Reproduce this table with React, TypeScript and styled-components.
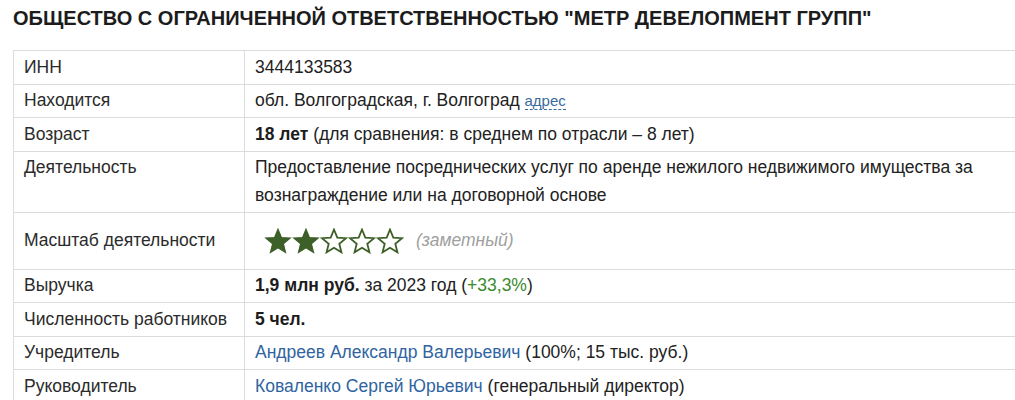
import styled, { createGlobalStyle } from "styled-components";

const Global = createGlobalStyle`
  body {
    margin: 0;
    background: #fff;
    font-family: "Liberation Sans", Arial, sans-serif;
    color: #222;
  }
`;

const Page = styled.div`
  padding: 7px 0 0 13px;
  overflow: hidden;
  width: 1015px;
  box-sizing: border-box;
`;

const Title = styled.h1`
  margin: 0 0 21px;
  font-size: 20px;
  line-height: 22px;
  font-weight: bold;
  color: #1c1c1c;
  white-space: nowrap;
`;

const Table = styled.table`
  border-collapse: collapse;
  width: 1015px;
  font-size: 17.5px;
  line-height: 27.5px;

  td {
    border: 1px solid #dcdcdc;
    vertical-align: top;
    padding: 2.5px 10px;
  }
`;

const Label = styled.td<{ $tall?: boolean }>`
  width: 210px;
  color: #2b2b2b;
  vertical-align: ${(p) => (p.$tall ? "middle" : "top")} !important;
`;

const Value = styled.td<{ $tall?: boolean }>`
  color: #222;
  padding-top: ${(p) => (p.$tall ? "14px" : "2.5px")} !important;
  padding-bottom: ${(p) => (p.$tall ? "14px" : "2.5px")} !important;

  b {
    color: #1c1c1c;
  }
`;

const Scale = styled.div`
  display: flex;
  align-items: center;
  gap: 12px;
  height: 28px;
  padding-left: 9px;
`;

const Stars = styled.span`
  display: flex;
`;

const Note = styled.span`
  font-style: italic;
  color: #a0a0a0;
`;

const Dashed = styled.span`
  font-size: 15px;
  color: #3b6a9c;
  border-bottom: 1px dashed #3b6a9c;
  line-height: 16px;
`;

const Link = styled.span`
  color: #2f64a0;
`;

const Up = styled.span`
  color: #3a8a2c;
`;

type Row = {
  label: string;
  value: React.ReactNode;
  tall?: boolean;
};

const Star = ({ filled }: { filled: boolean }) => (
  <svg width="28" height="26" viewBox="0 0 28 26">
    <polygon
      points="14,1.5 17.3,9.6 26,10.2 19.3,15.8 21.4,24.3 14,19.7 6.6,24.3 8.7,15.8 2,10.2 10.7,9.6"
      fill={filled ? "#3d5f28" : "#fff"}
      stroke="#3d5f28"
      strokeWidth={filled ? 1.4 : 1.8}
    />
  </svg>
);

const rows: Row[] = [
  { label: "ИНН", value: "3444133583" },
  {
    label: "Находится",
    value: (
      <>
        обл. Волгоградская, г. Волгоград <Dashed>адрес</Dashed>
      </>
    ),
  },
  {
    label: "Возраст",
    value: (
      <>
        <b>18 лет</b> (для сравнения: в среднем по отрасли – 8 лет)
      </>
    ),
  },
  {
    label: "Деятельность",
    value:
      "Предоставление посреднических услуг по аренде нежилого недвижимого имущества за вознаграждение или на договорной основе",
  },
  {
    label: "Масштаб деятельности",
    tall: true,
    value: (
      <Scale>
        <Stars>
          {[0, 1, 2, 3, 4].map((i) => (
            <Star key={i} filled={i < 2} />
          ))}
        </Stars>
        <Note>(заметный)</Note>
      </Scale>
    ),
  },
  {
    label: "Выручка",
    value: (
      <>
        <b>1,9 млн руб.</b> за 2023 год (<Up>+33,3%</Up>)
      </>
    ),
  },
  { label: "Численность работников", value: <b>5 чел.</b> },
  {
    label: "Учредитель",
    value: (
      <>
        <Link>Андреев Александр Валерьевич</Link> (100%; 15 тыс. руб.)
      </>
    ),
  },
  {
    label: "Руководитель",
    value: (
      <>
        <Link>Коваленко Сергей Юрьевич</Link> (генеральный директор)
      </>
    ),
  },
];

const App = () => {
  return (
    <Page>
      <Global />
      <Title>ОБЩЕСТВО С ОГРАНИЧЕННОЙ ОТВЕТСТВЕННОСТЬЮ "МЕТР ДЕВЕЛОПМЕНТ ГРУПП"</Title>
      <Table>
        <tbody>
          {rows.map((r) => (
            <tr key={r.label}>
              <Label $tall={r.tall}>{r.label}</Label>
              <Value $tall={r.tall}>{r.value}</Value>
            </tr>
          ))}
        </tbody>
      </Table>
    </Page>
  );
};

export default App;
